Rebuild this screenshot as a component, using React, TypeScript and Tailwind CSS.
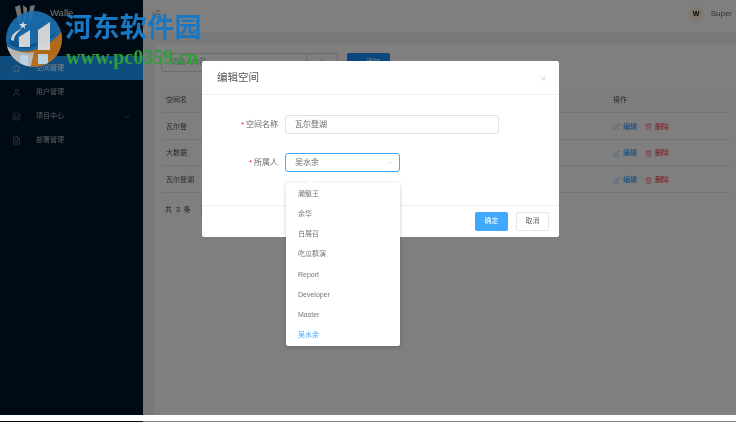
import { Star, User, Layers, FileText, ChevronDown, ChevronUp, X, PenLine, Trash2, Search, Plus, Indent } from 'lucide-react';

const font = 'font-["Liberation_Sans","Noto_Sans_CJK_SC",sans-serif]';

const menu = [
  { label: '空间管理', Icon: Star, active: true },
  { label: '用户管理', Icon: User },
  { label: '项目中心', Icon: Layers, arrow: true },
  { label: '部署管理', Icon: FileText },
];

const rows = ['瓦尔登', '大数据', '瓦尔登湖'];
const options = ['瀚魁王', '余华', '白展召', '吃瓜群演', 'Report', 'Developer', 'Master', '吴水余'];

function Sidebar() {
  return (
    <div className="w-[143px] h-full shrink-0 bg-[#001529] flex flex-col">
      <div className="h-[38px] pl-[14px] pt-[4px] shrink-0">
        {/* walle logo, mostly hidden under the watermark */}
        <svg width="22" height="22" viewBox="0 0 22 22">
          <path d="M1 3 L6 1 L8 14 L5 20 Z M9 1 L13 4 L13 14 L10 19 Z M16 2 L21 1 L18 14 L14 19 Z" fill="#e0e0e0" />
        </svg>
      </div>
      <div className="h-[18px] flex items-center pl-[36px] text-[7px] text-[#c8ccd0]">首页</div>
      {menu.map(({ label, Icon, active, arrow }) => (
        <div
          key={label}
          className={`h-[24px] flex items-center pl-[12px] pr-[12px] pt-[1px] text-[7px] ${active ? 'bg-[#1f9bff] text-white' : 'text-[#b4bac0]'}`}
        >
          <Icon size={9} strokeWidth={1.1} />
          <span className="ml-[15px] flex-1">{label}</span>
          {arrow && <ChevronDown size={8} strokeWidth={1.1} />}
        </div>
      ))}
    </div>
  );
}

function Page() {
  return (
    <div className="flex-1 h-full bg-[#f0f2f5] flex flex-col">
      <div className="h-[32px] bg-white flex items-center pl-[8px] pr-[4px] pb-[4px] shrink-0">
        <Indent size={10} strokeWidth={1.1} className="text-[#333]" />
        <div className="ml-auto flex items-center gap-[7px]">
          <div className="w-[15px] h-[15px] rounded-full bg-[#fff0d8] flex items-center justify-center text-[7px] font-bold text-black">W</div>
          <span className="text-[8px] text-[#666]">Super</span>
        </div>
      </div>
      <div className="flex-1 mt-[12px] ml-[12px] bg-white px-[6px] pt-[9px]">
        <div className="flex items-center gap-[9px]">
          <div className="w-[177px] h-[19px] border border-[#d9d9d9] rounded-[2px] flex items-center text-[7px] text-[#aaa]">
            <span className="flex-1 pl-[9px]">请输入内容</span>
            <div className="w-[31px] h-full border-l border-[#d9d9d9] flex items-center justify-center">
              <Search size={7} />
            </div>
          </div>
          <div className="w-[43px] h-[19px] bg-[#1890ff] rounded-[2px] text-white text-[7px] flex items-center justify-center gap-[3px]">
            <Plus size={6} /> 添加
          </div>
        </div>
        <div className="mt-[16px] h-[25px] bg-[#fafafa] border-b border-[#e8e8e8] flex items-center px-[5px] text-[7px] text-[#555]">
          <span>空间名</span>
          <span className="ml-auto w-[112px]">操作</span>
        </div>
        {rows.map((r) => (
          <div key={r} className="h-[26.7px] border-b border-[#e8e8e8] flex items-center px-[5px] pt-[2px] text-[7px] text-[#555]">
            <span>{r}</span>
            <span className="ml-auto w-[112px] flex items-center">
              <PenLine size={7} strokeWidth={1.3} className="text-[#1890ff]" />
              <span className="ml-[3px] text-[#1890ff]">编辑</span>
              <Trash2 size={7} strokeWidth={1.3} className="ml-[8px] text-[#f5222d]" />
              <span className="ml-[3px] text-[#f5222d]">删除</span>
            </span>
          </div>
        ))}
        <div className="mt-[10px] pl-[4px] flex items-center text-[7px] text-[#444] gap-[9px]">
          <span className="tracking-[1px] whitespace-pre">共 3 条</span>
          <div className="w-[40px] h-[14px] border border-[#d9d9d9] rounded-[2px]" />
        </div>
      </div>
    </div>
  );
}

function Modal() {
  return (
    <div className="absolute left-[202px] top-[61px] w-[357px] h-[176px] bg-white rounded-[2px] flex flex-col">
      <div className="h-[34px] border-b border-[#f0f0f0] flex items-center justify-between pl-[15px] pr-[12px] pt-[1px] shrink-0">
        <span className="text-[10.5px] text-[#555]">编辑空间</span>
        <X size={7} className="text-[#aaa]" />
      </div>
      <div className="flex-1 pt-[20px]">
        <div className="flex items-center h-[19px]">
          <label className="w-[76px] text-right text-[8px] text-[#666]"><span className="text-[#f5222d] mr-[2px]">*</span>空间名称</label>
          <div className="ml-[7px] w-[214px] h-[19px] border border-[#e2e2e2] rounded-[3px] flex items-center px-[9px] text-[8px] text-[#666]">瓦尔登湖</div>
        </div>
        <div className="flex items-center h-[19px] mt-[19px]">
          <label className="w-[76px] text-right text-[8px] text-[#666]"><span className="text-[#f5222d] mr-[2px]">*</span>所属人</label>
          <div className="ml-[7px] w-[115px] h-[19px] border border-[#40a9ff] rounded-[3px] flex items-center justify-between pl-[9px] pr-[5px] text-[8px] text-[#666]">
            <span>吴水余</span>
            <ChevronUp size={9} strokeWidth={1.1} className="text-[#bbb]" />
          </div>
        </div>
      </div>
      <div className="h-[32px] border-t border-[#eee] flex items-center justify-end gap-[8px] pr-[10px] shrink-0">
        <div className="w-[33px] h-[19px] bg-[#40a9ff] rounded-[2px] text-white text-[7px] flex items-center justify-center">确定</div>
        <div className="w-[33px] h-[19px] border border-[#e6e6e6] rounded-[2px] text-[#666] text-[7px] flex items-center justify-center">取消</div>
      </div>
    </div>
  );
}

function Dropdown() {
  return (
    <div className="absolute left-[286px] top-[183px] w-[114px] h-[163px] bg-white rounded-[2px] shadow-[0_1px_4px_rgba(0,0,0,0.2)] flex flex-col pt-[1px]">
      <div className="absolute left-[22px] top-[-2px] w-[5px] h-[5px] bg-white rotate-45" />
      {options.map((o, i) => (
        <div key={o} className={`h-[20.2px] flex items-center pl-[12px] text-[7px] ${i === 7 ? 'text-[#40a9ff]' : 'text-[#777]'}`}>{o}</div>
      ))}
    </div>
  );
}

function Watermark() {
  return (
    <div className="absolute left-0 top-0 w-[210px] h-[70px] pointer-events-none">
      <svg className="absolute left-0 top-0 opacity-90" width="70" height="70" viewBox="0 0 70 70">
        <clipPath id="disc"><circle cx="34" cy="39" r="28" /></clipPath>
        <g clipPath="url(#disc)">
          <rect x="0" y="0" width="70" height="70" fill="#1c72b4" />
          <path d="M4 44 C20 58 48 52 64 28 L64 70 L4 70 Z" fill="#c4741a" />
          <path d="M4 44 C14 52 26 54 34 52 L30 70 L4 70 Z" fill="#c8c8c8" />
          <path d="M10 44 C8 36 16 29 26 27 C18 32 14 38 18 42 C26 48 44 44 58 30 C48 46 22 54 10 44 Z" fill="#0f5a96" />
          <path d="M11 40 C11 35 15 31 22 29 C17 33 14 36 14 41 Z" fill="#e6e6e6" />
          <path d="M19 37 L30 30 V47 H19 Z" fill="#e8e8e8" />
          <path d="M38 30 L50 22 V50 H38 Z" fill="#e8e8e8" />
          <path d="M20 55 H28 V66 H20 Z M38 54 H48 V64 H38 Z" fill="#cfe0ee" />
          <path d="M23 21 L24 24 L27 24 L24.6 26 L25.5 29 L23 27 L20.5 29 L21.4 26 L19 24 L22 24 Z" fill="#eeeeee" />
        </g>
      </svg>
      <div className='absolute left-[65px] top-[13px] text-[27px] leading-[30px] font-bold tracking-[0.4px] text-[#1a78c2] font-["Liberation_Serif","Noto_Sans_CJK_SC",serif] whitespace-nowrap'>河东软件园</div>
      <div className='absolute left-[66px] top-[47px] text-[20px] leading-[20px] font-bold text-[#2e9e3a] font-["Liberation_Serif",serif] whitespace-nowrap'>www.pc0359.cn</div>
    </div>
  );
}

export default function App() {
  return (
    <div className={`relative w-[736px] h-[422px] overflow-hidden bg-white blur-[0.4px] ${font}`}>
      <div className="relative h-[415px] flex">
        <Sidebar />
        <Page />
        <div className="absolute left-[50px] top-[7px] text-[9.5px] leading-[12px] text-[#e8e8e8]">Walle</div>
        <div className="absolute inset-0 bg-black/50" />
      </div>
      <div className="absolute left-0 right-0 bottom-0 h-px flex">
        <div className="w-[143px] bg-[#000a15]" />
        <div className="flex-1 bg-[#808080]" />
      </div>
      <Modal />
      <Dropdown />
      <Watermark />
    </div>
  );
}
